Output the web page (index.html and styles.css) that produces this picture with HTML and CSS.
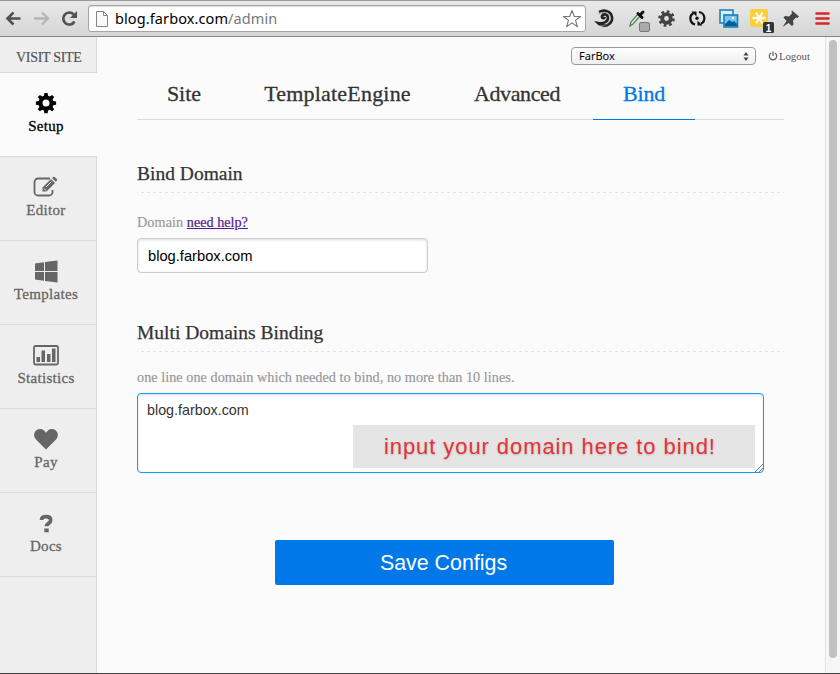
FILE: index.html
```
<!DOCTYPE html>
<html lang="en">
<head>
<meta charset="utf-8">
<title>FarBox Admin</title>
<link rel="stylesheet" href="styles.css">
</head>
<body>
<div class="window">
  <header class="toolbar">
    <svg class="nav-icons" width="88" height="36" viewBox="0 0 88 36" fill="none">
      <path d="M20.500 18.500H8M13.500 12.500l-6 6 6 6" stroke="#505050" stroke-width="2.600"/>
      <path d="M34 18.500h13M42 12.500l6 6-6 6" stroke="#b5b5b5" stroke-width="2.400"/>
      <path d="M74.500 21.500a6 6 0 1 1-.8-7" stroke="#505050" stroke-width="2.600"/>
      <path d="M77 11v7h-7z" fill="#505050"/>
    </svg>
    <div class="address">
      <svg width="12" height="16" viewBox="0 0 12 16"><path d="M.5.500h7l4 4v11H.5z" fill="#fafafa" stroke="#858585"/><path d="M7.500.500v4h4" fill="none" stroke="#858585"/></svg>
      <span class="url">blog.farbox.com<span class="path">/admin</span></span>
      <svg class="star" width="20" height="20" viewBox="0 0 20 20"><path d="M10 1.500l2.300 6h6.200l-5 3.900 1.900 6.300-5.400-3.800-5.400 3.800 1.900-6.300-5-3.900h6.200z" fill="#fff" stroke="#777" stroke-width="1.100" stroke-linejoin="round"/></svg>
    </div>
    <svg class="extensions" width="254" height="36" viewBox="586 0 254 36" fill="none">
      <path d="M599 12c5-3 12-1 13 5 1 6-5 10-10 8-2-.5-3-1-4-2 5 1 10-1 10-5 0-4-5-4.500-6-2-.5 2 2 3 3 1" stroke="#222" stroke-width="2.600"/>
      <path d="M598.500 14c5-3 11-2 12 3M600 25.500c5 1 9-2 9.500-5" stroke="#888" stroke-width=".8"/>
      <path d="M630 26l1-4 7-8 2 2-7 8z" stroke="#527a57" stroke-width="1.200" fill="#e8f0e8"/>
      <path d="M638 13.500l4 4M640 15l3-3" stroke="#111" stroke-width="3" stroke-linecap="round"/>
      <rect x="639.500" y="22.500" width="10" height="9" rx="1.500" fill="#aaa" stroke="#777"/>
      <circle cx="666.500" cy="18.500" r="4.300" stroke="#444" stroke-width="3.800"/>
      <circle cx="666.500" cy="18.500" r="7" stroke="#444" stroke-width="2.600" stroke-dasharray="2.750 2.750"/>
      <path d="M695 24.500a6.300 6.300 0 0 1-1.500-11.500M699 12a6.300 6.300 0 0 1 2 11.800" stroke="#111" stroke-width="2.200"/>
      <path d="M691.500 11.500h5v5zM702.500 25.500h-5v-5z" fill="#111"/><circle cx="697" cy="18.300" r="1.700" fill="#111"/>
      <rect x="720" y="10" width="13" height="13" fill="#d9eefa" stroke="#1e83c4" stroke-width="1.600"/>
      <rect x="724" y="15" width="13.500" height="12" fill="#75c6ee" stroke="#147fbd" stroke-width="1.600"/>
      <path d="M725 24l4-4 3 2 2-1 3 3v2h-12z" fill="#075e96"/><circle cx="733" cy="18" r="1.300" fill="#fff"/>
      <rect x="750" y="9" width="18" height="18" rx="3" fill="#f9cf3b"/>
      <path d="M752.500 18h13M756 12.500l6.500 11M762.500 12.500l-6.500 11" stroke="#fffbe2" stroke-width="2.400"/>
      <rect x="763" y="22" width="11" height="11" rx="1.500" fill="#333"/>
      <text class="badge-text" x="768.500" y="31.500" text-anchor="middle">1</text>
      <path d="M792 10.500l7 6-1.500 1.500-1.500-.5-3 3 .5 4-1.500 1.500-3.500-3-6 4 4-6-3-3.500 1.500-1.500 4 .5 3-3-.500-1.500z" fill="#444"/>
      <path d="M816.500 13.500h12M816.500 18.500h12M816.500 23.500h12" stroke="#d72628" stroke-width="2.600" stroke-linecap="round"/>
    </svg>
  </header>

  <div class="viewport">
    <aside class="sidebar">
      <a class="visit">VISIT SITE</a>
      <a class="item active">
        <svg width="28" height="24" viewBox="0 0 28 24"><path fill-rule="evenodd" d="M12.400 2h3.200l.5 2.800 1.700.7 2.300-1.600 2.100 2.100-1.600 2.300.7 1.700 2.800.5v3.200l-2.800.5-.7 1.700 1.600 2.300-2.100 2.100-2.300-1.600-1.700.7-.5 2.800h-3.200l-.5-2.800-1.700-.7-2.300 1.600-2.100-2.100 1.600-2.300-.7-1.700-2.800-.5v-3.200l2.800-.5.700-1.700L5.800 6l2.100-2.100 2.300 1.600 1.700-.7zM14 8.600a3.500 3.500 0 1 0 0 7 3.500 3.500 0 0 0 0-7z"/></svg>
        <span>Setup</span>
      </a>
      <a class="item">
        <svg width="28" height="24" viewBox="0 0 28 24"><path d="M18 3.500H6a3.500 3.500 0 0 0-3.500 3.500v10A3.500 3.500 0 0 0 6 20.500h11a3.500 3.500 0 0 0 3.500-3.500v-2" fill="none" stroke="currentColor" stroke-width="1.800"/><path d="M10.500 12.500l8.500-8.500 4 4-8.500 8.500h-4z"/><path d="M20 3l1.200-1q1-.5 2 .4l1.600 1.600q.8 1 0 1.800l-1 1z"/><path d="M12 13.500l2 2M14 12l5.500-5.500" stroke="#eee" stroke-width="1"/></svg>
        <span>Editor</span>
      </a>
      <a class="item">
        <svg width="28" height="24" viewBox="0 0 28 24"><path d="M3 4.500l9-1.200V12H3zM13 3.100L25.500 1.500v10.500H13zM3 13h9v8.700L3 20.500zM13 13h12.500v10.500L13 21.900z"/></svg>
        <span>Templates</span>
      </a>
      <a class="item">
        <svg width="28" height="24" viewBox="0 0 28 24"><rect x="2" y="3" width="24" height="18.500" rx="1.500" fill="none" stroke="currentColor" stroke-width="1.800"/><path d="M4.500 14H8v5H4.500zM9.500 7.500H13V19H9.500zM15 11h3.500v8H15zM20 5.500h3.500V19H20z"/></svg>
        <span>Statistics</span>
      </a>
      <a class="item">
        <svg width="28" height="24" viewBox="0 0 28 24"><path d="M14 22.500L4 12.500C0 8 3 2 8 2c3 0 5 2 6 4 1-2 3-4 6-4 5 0 8 6 4 10.500z"/></svg>
        <span>Pay</span>
      </a>
      <a class="item">
        <svg width="28" height="24" viewBox="0 0 28 24"><path d="M9.500 9c0-2.300 2-3.300 4.800-3.300 3 0 4.400 1.400 4.400 3.600 0 3.200-4.200 2.900-4.200 6" fill="none" stroke="currentColor" stroke-width="3.700"/><path d="M12.300 17.500h4.400v3.700h-4.400z"/></svg>
        <span>Docs</span>
      </a>
    </aside>

    <main class="main">
      <div class="topbar">
        <div class="select"><span>FarBox</span><svg width="6" height="9" viewBox="0 0 6 9"><path d="M3 0l2.500 3.500h-5zM3 9L.5 5.500h5z" fill="#444"/></svg></div>
        <a class="logout"><svg width="10" height="10" viewBox="0 0 10 10" fill="none" stroke="#666" stroke-width="1.300"><path d="M3 2a3.700 3.700 0 1 0 4 0M5 .5v4.500"/></svg><span>Logout</span></a>
      </div>
      <nav class="tabs">
        <a class="tab site"><span>Site</span></a>
        <a class="tab engine"><span>TemplateEngine</span></a>
        <a class="tab advanced"><span>Advanced</span></a>
        <a class="tab bind"><span>Bind</span></a>
      </nav>
      <section class="section">
        <h2>Bind Domain</h2>
        <div class="label"><span class="domain">Domain</span> <a class="help">need help?</a></div>
        <div class="input">blog.farbox.com</div>
      </section>
      <section class="section multi">
        <h2>Multi Domains Binding</h2>
        <div class="label hint">one line one domain which needed to bind, no more than 10 lines.</div>
        <div class="textarea">
          <span>blog.farbox.com</span>
          <div class="callout">input your domain here to bind!</div>
          <svg class="grip" width="8" height="8" viewBox="0 0 8 8"><path d="M0 8l8-8M4 8l4-4" stroke="#555" stroke-width=".8"/></svg>
        </div>
      </section>
      <a class="save">Save Configs</a>
    </main>
    <div class="scrollbar"><div class="thumb"></div></div>
  </div>
</div>
</body>
</html>
```
FILE: styles.css
```
* { box-sizing: border-box; }
body { margin: 0; background: #fbfbfb; font-family: "Liberation Serif", serif; color: #333; }
svg { display: block; flex: none; }
.window { width: 840px; height: 674px; display: flex; flex-direction: column; overflow: hidden; border-bottom: 1px solid #444; }

.toolbar { height: 37px; flex: none; display: flex; align-items: flex-start; background: linear-gradient(#e9e9e9, #d5d5d5); border-top: 1px solid #999; border-bottom: 1px solid #858585; }
.toolbar > svg { margin-top: -1px; }
.address { width: 498px; height: 27px; margin-top: 4px; display: flex; align-items: center; padding: 0 3px 0 7px; background: #fff; border: 1px solid #a5a5a5; border-radius: 3px; box-shadow: inset 0 1px 1px #ddd; }
.url { flex: 1; margin-left: 7px; font: 14.500px/22px "Noto Sans", sans-serif; color: #000; letter-spacing: .1px; padding-bottom: 2px; }
.path { color: #777; }
.badge-text { font: bold 10px "Liberation Sans", sans-serif; fill: #fff; }

.viewport { flex: 1; display: flex; min-height: 0; }
.sidebar { width: 97px; flex: none; background: #eee; border-right: 1px solid #dadada; }
.visit { height: 36px; display: block; padding-left: 16px; border-bottom: 1px solid #dadada; font-size: 14px; line-height: 41px; letter-spacing: -.3px; color: #555; -webkit-text-stroke: .2px; }
.item { height: 84px; display: flex; flex-direction: column; align-items: center; padding: 18px 4px 0 0; border-bottom: 1px solid #dadada; color: #666; font-size: 15px; line-height: 20px; letter-spacing: .3px; -webkit-text-stroke: .3px; }
.item svg { fill: currentColor; -webkit-text-stroke: 0; margin-bottom: 1px; }
.active { width: 97px; padding-right: 5px; background: #fbfbfb; color: #000; }

.main { flex: 1; padding: 10px 41px 0 40px; }
.topbar { height: 18px; margin-right: -27px; display: flex; justify-content: flex-end; align-items: center; }
.select { width: 185px; height: 18px; display: flex; align-items: center; justify-content: space-between; padding: 0 6px 0 7px; border: 1px solid #999; border-radius: 4px; background: linear-gradient(#fff, #eee); font: 11px/16px "Noto Sans", sans-serif; color: #000; }
.logout { display: flex; align-items: center; width: 43px; margin-left: 12px; gap: 1px; font-size: 10.700px; color: #555; white-space: nowrap; }
.tabs { height: 55px; display: flex; gap: 3px; border-bottom: 1px solid #ddd; font-size: 22px; line-height: 57px; }
.tab { height: 55px; text-align: center; white-space: nowrap; -webkit-text-stroke: .3px; }
.site { width: 94px; }
.engine { width: 207px; letter-spacing: .2px; }
.advanced { width: 146px; letter-spacing: -.4px; }
.bind { width: 102px; letter-spacing: -.2px; color: #0078e7; border-bottom: 1px solid #0078e7; }

.section { padding-top: 42px; }
h2 { margin: 0; height: 31px; font-weight: 400; font-size: 19.500px; line-height: 24px; -webkit-text-stroke: .25px; background: repeating-linear-gradient(90deg, #e3e3e3 0 1px, transparent 1px 4px, #e3e3e3 4px 6px) 0 100% / 100% 1px no-repeat; }
.label { margin-top: 20px; height: 20px; font-size: 14.200px; line-height: 19px; color: #999; white-space: nowrap; -webkit-text-stroke: .2px; }
.help { color: #551a8b; text-decoration: underline; }
.domain { letter-spacing: .1px; }
.input { width: 291px; height: 35px; margin-top: 5px; padding: 0 10px; border: 1px solid #ccc; border-radius: 4px; background: #fff; box-shadow: inset 0 1px 3px #ddd; font: 14.700px/35px "Liberation Sans", sans-serif; color: #000; }
.multi { padding-top: 48px; }
.hint { margin-top: 16px; letter-spacing: .05px; }
.textarea { position: relative; width: 627px; height: 80px; margin-top: 5px; padding: 6px 9px; border: 1px solid #129fea; border-radius: 4px; background: #fff; box-shadow: inset 0 1px 3px #ddd; font: 14.300px/20px "Liberation Sans", sans-serif; color: #333; }
.callout { position: absolute; left: 215px; top: 31px; width: 402px; height: 43px; padding-left: 31px; background: #e5e5e5; color: #e73335; font: 22px/43px "Liberation Sans", sans-serif; text-shadow: 0 1px 2px #bbb; letter-spacing: .92px; white-space: nowrap; }
.grip { position: absolute; right: 0; bottom: 0; }
.save { display: block; width: 339px; height: 45px; margin: 67px 0 0 138px; padding-right: 2px; border-radius: 2px; background: #0078e7; color: #fff; text-align: center; font: 21.400px/46px "Liberation Sans", sans-serif; }

.scrollbar { width: 15px; flex: none; padding: 3px 3px 0; background: #f6f6f6; border-left: 1px solid #e3e3e3; }
.thumb { width: 8px; height: 618px; border-radius: 4px; background: #c1c1c1; }
```
